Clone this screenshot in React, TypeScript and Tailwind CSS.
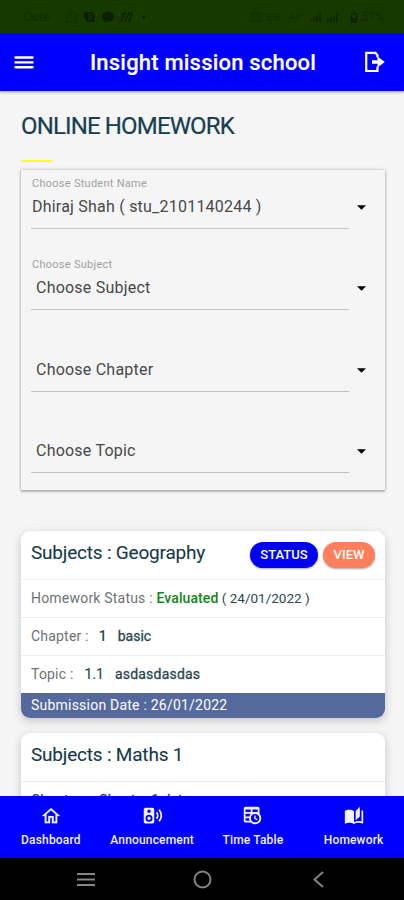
import type { ReactNode } from "react";
import { MdAutoStories } from "react-icons/md";

interface ISelectField {
	label?: string;
	value: string;
	placeholder?: boolean;
}

interface INavItem {
	label: string;
	icon: ReactNode;
	className: string;
}

const HomeIcon = () => (
	<svg viewBox="2 2 20 20" className="size-[18px]" fill="currentColor" stroke="currentColor" strokeWidth="0.2">
		<path d="M12 5.69L17 10.19V18H15V12H9V18H7V10.19L12 5.69M12 3L2 12H5V20H11V14H13V20H19V12H22L12 3Z" />
	</svg>
);

const SpeakerIcon = () => (
	<svg viewBox="0 0 24 24" className="size-[21px]" fill="currentColor">
		<path d="M20.07,19.07L18.66,17.66C20.11,16.22 21,14.21 21,12C21,9.78 20.11,7.78 18.66,6.34L20.07,4.93C21.88,6.74 23,9.24 23,12C23,14.76 21.88,17.26 20.07,19.07M17.24,16.24L15.83,14.83C16.55,14.11 17,13.11 17,12C17,10.89 16.55,9.89 15.83,9.17L17.24,7.76C18.33,8.85 19,10.35 19,12C19,13.65 18.33,15.15 17.24,16.24M4,3H12A2,2 0 0,1 14,5V19A2,2 0 0,1 12,21H4A2,2 0 0,1 2,19V5A2,2 0 0,1 4,3M8,5A2,2 0 0,0 6,7A2,2 0 0,0 8,9A2,2 0 0,0 10,7A2,2 0 0,0 8,5M8,11A4,4 0 0,0 4,15A4,4 0 0,0 8,19A4,4 0 0,0 12,15A4,4 0 0,0 8,11M8,13A2,2 0 0,1 10,15A2,2 0 0,1 8,17A2,2 0 0,1 6,15A2,2 0 0,1 8,13Z" />
	</svg>
);

const TimetableIcon = () => (
	<svg viewBox="0 0 24 24" className="size-[21px]" fill="currentColor">
		<path d="M14,12H15.5V14.82L17.94,16.23L17.19,17.53L14,15.69V12M4,2H18A2,2 0 0,1 20,4V10.1C21.24,11.36 22,13.09 22,15A7,7 0 0,1 15,22C13.09,22 11.36,21.24 10.1,20H4A2,2 0 0,1 2,18V4A2,2 0 0,1 4,2M4,15V18H8.67C8.24,17.09 8,16.07 8,15H4M4,8H10V5H4V8M18,8V5H12V8H18M4,13H8.29C8.63,11.85 9.26,10.82 10.1,10H4V13M15,10.15A4.85,4.85 0 0,0 10.15,15C10.15,17.68 12.32,19.85 15,19.85A4.85,4.85 0 0,0 19.85,15C19.85,12.32 17.68,10.15 15,10.15Z" />
	</svg>
);

const LogoutIcon = () => (
	<svg viewBox="0 0 22 22" className="size-[22px]" fill="none" stroke="currentColor" strokeWidth="2.2">
		<path d="M13.5 6.500V4.300L11.500 1.800H2.200V20H13.500V15.500" />
		<path d="M8 9.300H13.500V5.500L20.800 11L13.500 16.500V12.700H8Z" fill="currentColor" stroke="none" />
	</svg>
);

const StatusBar = () => (
	<div className="flex h-[33px] shrink-0 items-center justify-between bg-[#163900] pl-[23px] pr-5 text-[12px] text-[#102b00]">
		<div className="flex items-center">
			<span className="w-[42px] text-[13px]">Octe</span>
			<svg viewBox="0 0 84 14" className="h-3.5 w-[84px]" fill="none" stroke="currentColor">
				<path d="M1 13l1-4a5.2 5.2 0 1 1 2.5 2.8zM5 4q0 4 4 5" />
				<path d="M19 2h6a5 5 0 0 1 5 5v5h-5a6 6 0 0 1-6-6z" fill="#0b2000" stroke="none" />
				<path d="M27 5q-4-2-4 0t3 2t-3 2" stroke="#163900" />
				<ellipse cx="43" cy="6.5" rx="6" ry="5" fill="#0b2000" stroke="none" />
				<path d="M39 9v4l4-2z" fill="#0b2000" stroke="none" />
				<path d="M56 12l4-10M60 12l4-10M64 12l3-10M56 4h5" stroke="#0b2000" strokeWidth="1.4" />
				<circle cx="79" cy="7" r="1.7" fill="#0b2000" stroke="none" />
			</svg>
		</div>
		<div className="flex items-center gap-1">
			<svg viewBox="0 0 96 14" className="h-3.5 w-24" fill="none" stroke="currentColor">
				<path d="M1 3h10v8H1zM4 5v4M8 5v4M16 4h6M24 4h8M16 7h5M23 7h7M17 10h5M25 10h6" />
				<path d="M43 9V4l-3 4h5M47 4v5M50 9V4h5" />
				<path d="M61 12V9M64 12V7M67 12V5M70 12V2M78 12V9M81 12V7M84 12V5M87 12V2" strokeWidth="1.5" stroke="#0d2500" />
			</svg>
			<svg viewBox="0 0 8 14" className="h-3 w-2" fill="none" stroke="#0b2000" strokeWidth="1.5">
				<path d="M1 3h6v10H1zM3 1h2M2 9h4v3H2z" />
			</svg>
			<span>57%</span>
		</div>
	</div>
);

const SelectField = ({ label, value, placeholder }: ISelectField) => (
	<div className="flex h-[81.4px] gap-[8px]">
		<div className="flex h-[59px] w-[318px] flex-col border-b border-[#c4c4c4]">
			<div className="h-[26px] pt-[7px] pl-px text-[11px] leading-[14px] tracking-[0.27px] text-[#a1a1a1]">{label}</div>
			<div className={`pt-px text-[16px] leading-5 tracking-[0.22px] text-[#484848] ${placeholder ? "pl-[5px]" : "pl-px"}`}>{value}</div>
		</div>
		<svg viewBox="0 0 10 5" className="mt-[35px] h-[5px] w-[9px]">
			<path d="M0 0h10L5 5z" fill="#000" />
		</svg>
	</div>
);

const DetailRow = ({ children }: { children: ReactNode }) => (
	<div className="flex h-[38px] items-center border-t border-[#ededed] px-2.5 text-[14px] whitespace-pre text-[#2b474e]">{children}</div>
);

const NavItem = ({ label, icon, className }: INavItem) => (
	<div className={`flex flex-col items-center ${className}`}>
		<div className="flex h-[21px] items-center">{icon}</div>
		<span className="mt-1.5 text-[12px] leading-4 font-medium tracking-[0.17px] whitespace-nowrap">{label}</span>
	</div>
);

const App = () => {
	return (
		<div className="flex h-[900px] w-[404px] flex-col overflow-hidden bg-[#f5f5f5] font-[Roboto,sans-serif]">
			<StatusBar />
			<header className="z-10 flex h-[58px] shrink-0 items-center bg-[#0000ff] pr-[18px] pl-3.5 text-white shadow-[0_1px_3px_rgba(0,0,0,0.4)]">
				<svg viewBox="0 0 20 14" className="h-3.5 w-5" stroke="currentColor" strokeWidth="2.4">
					<path d="M.5 2.500h19M.5 7.400h19M.5 12.300h19" />
				</svg>
				<h1 className="flex-1 pl-2 text-center text-[22px] font-medium tracking-[0.2px] [-webkit-text-stroke:0.15px_#fff]">Insight mission school</h1>
				<LogoutIcon />
			</header>

			<main className="flex min-h-0 flex-1 flex-col overflow-hidden pr-[19px] pl-[21px]">
				<h2 className="mt-[19px] text-[24px] leading-8 tracking-[-0.85px] text-[#173f50] [-webkit-text-stroke:0.2px_#173f50]">ONLINE HOMEWORK</h2>
				<div className="mt-[18px] h-[2px] w-[31px] shrink-0 bg-[#ffff22]" />

				<section className="mt-2 h-[320px] shrink-0 px-2.5 shadow-[0_0_3px_rgba(0,0,0,0.3),0_2px_2px_rgba(0,0,0,0.2)]">
					<SelectField label="Choose Student Name" value="Dhiraj Shah ( stu_2101140244 )" />
					<SelectField label="Choose Subject" value="Choose Subject" placeholder />
					<SelectField value="Choose Chapter" placeholder />
					<SelectField value="Choose Topic" placeholder />
				</section>

				<article className="mt-[41px] shrink-0 overflow-hidden rounded-[9px] bg-white shadow-[0_3px_10px_rgba(0,0,0,0.2)]">
					<div className="flex h-12 items-center pr-2.5 pl-2.5">
						<h3 className="flex-1 pb-1 text-[19px] tracking-[-0.2px] text-[#173a48] [-webkit-text-stroke:0.1px_#173a48]">Subjects : Geography</h3>
						<button className="h-[26px] w-[68px] rounded-full bg-[#0000f5] text-[13px] font-medium text-white shadow-[0_1px_2px_rgba(0,0,0,0.35)]">STATUS</button>
						<button className="ml-[5px] h-[26px] w-[52px] rounded-full bg-[#ff7f5c] text-[13px] font-medium text-white shadow-[0_1px_2px_rgba(0,0,0,0.35)]">VIEW</button>
					</div>
					<DetailRow>
						<span className="tracking-[0.2px] text-[#6d7375]">Homework Status : </span>
						<span className="font-medium tracking-[0.1px] text-[#118516]">Evaluated</span>
						<span className="text-[13.5px]"> ( 24/01/2022 )</span>
					</DetailRow>
					<DetailRow>
						<span className="tracking-[0.2px] text-[#6d7375]">Chapter :</span>
						<span className="ml-2.5 font-medium">1</span>
						<span className="ml-[11px] [-webkit-text-stroke:0.3px_#2b474e]">basic</span>
					</DetailRow>
					<DetailRow>
						<span className="tracking-[0.2px] text-[#6d7375]">Topic :</span>
						<span className="ml-[11px] [-webkit-text-stroke:0.2px_#2b474e]">1.1</span>
						<span className="ml-[11px] tracking-[0.2px] [-webkit-text-stroke:0.3px_#2b474e]">asdasdasdas</span>
					</DetailRow>
					<div className="flex h-[25px] items-center bg-[#55699c] px-2.5 text-[14px] tracking-[0.22px] text-white">Submission Date : 26/01/2022</div>
				</article>

				<article className="mt-[15px] shrink-0 overflow-hidden rounded-[9px] bg-white shadow-[0_3px_10px_rgba(0,0,0,0.2)]">
					<div className="flex h-12 items-center px-2.5">
						<h3 className="pb-1 text-[19px] tracking-[-0.2px] text-[#173a48] [-webkit-text-stroke:0.1px_#173a48]">Subjects : Maths 1</h3>
					</div>
					<DetailRow>
						<span className="tracking-[0.2px] [-webkit-text-stroke:0.2px_#2b474e]">Chapter :</span>
						<span className="ml-2.5 [-webkit-text-stroke:0.3px_#2b474e]">Chapter 1 data</span>
					</DetailRow>
				</article>
			</main>

			<nav className="z-10 flex h-[62px] shrink-0 bg-[#0000ff] pt-[9px] text-[#f2f2ff]">
				<NavItem label="Dashboard" className="w-[102px]" icon={<HomeIcon />} />
				<NavItem label="Announcement" className="w-[101px]" icon={<SpeakerIcon />} />
				<NavItem label="Time Table" className="w-[101px]" icon={<TimetableIcon />} />
				<NavItem label="Homework" className="w-[101px]" icon={<MdAutoStories className="size-5" />} />
			</nav>
			<div className="flex h-[42px] shrink-0 items-center bg-black text-[#858585]">
				<svg viewBox="0 0 404 42" className="h-[42px] w-[404px]" fill="none" stroke="currentColor" strokeWidth="2">
					<path d="M77 16h18M77 21.5h18M77 27h18" />
					<circle cx="202.5" cy="21.5" r="8" />
					<path d="M323 14L314.5 21.5L323 29" />
				</svg>
			</div>
		</div>
	);
};

export default App;
